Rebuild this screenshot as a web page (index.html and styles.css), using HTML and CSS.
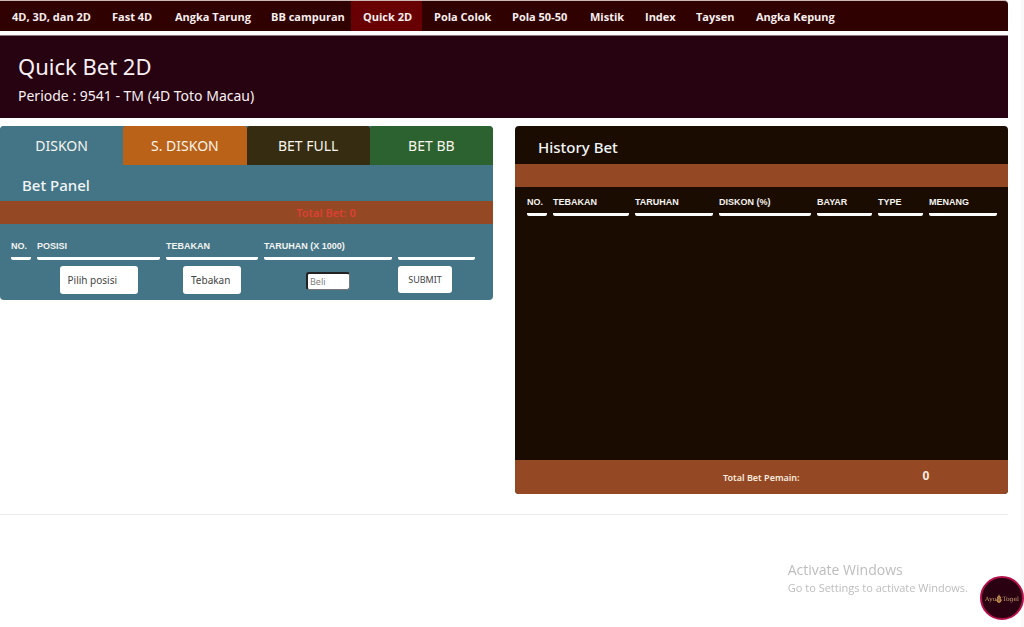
FILE: index.html
```html
<!DOCTYPE html>
<html lang="id">
<head>
<meta charset="utf-8">
<meta name="viewport" content="width=device-width, initial-scale=1">
<title>Quick Bet 2D</title>
<link rel="stylesheet" href="styles.css">
</head>
<body>
<div class="page">
  <nav class="nav">
    <a href="#">4D, 3D, dan 2D</a>
    <a href="#">Fast 4D</a>
    <a href="#">Angka Tarung</a>
    <a href="#">BB campuran</a>
    <a href="#" class="active">Quick 2D</a>
    <a href="#">Pola Colok</a>
    <a href="#">Pola 50-50</a>
    <a href="#">Mistik</a>
    <a href="#">Index</a>
    <a href="#">Taysen</a>
    <a href="#">Angka Kepung</a>
  </nav>
  <header class="banner">
    <h1>Quick Bet 2D</h1>
    <p>Periode : 9541 - TM (4D Toto Macau)</p>
  </header>
  <main class="panels">
    <section class="bet">
      <div class="tabs">
        <button type="button" class="tab tab-diskon">DISKON</button>
        <button type="button" class="tab tab-sdiskon">S. DISKON</button>
        <button type="button" class="tab tab-full">BET FULL</button>
        <button type="button" class="tab tab-bb">BET BB</button>
      </div>
      <h2>Bet Panel</h2>
      <div class="band total">Total Bet: 0</div>
      <form>
        <table class="grid bet-grid">
          <colgroup><col class="w20"><col class="w123"><col class="w92"><col class="w128"><col class="w77"></colgroup>
          <thead>
            <tr><th>NO.</th><th>POSISI</th><th>TEBAKAN</th><th>TARUHAN (X 1000)</th><th></th></tr>
          </thead>
          <tbody>
            <tr>
              <td></td>
              <td><select class="pick posisi" aria-label="Posisi"><option>Pilih posisi</option></select></td>
              <td><select class="pick tebakan" aria-label="Tebakan"><option>Tebakan</option></select></td>
              <td><input class="beli" type="text" placeholder="Beli" aria-label="Taruhan"></td>
              <td class="left"><button type="submit" class="submit">SUBMIT</button></td>
            </tr>
          </tbody>
        </table>
      </form>
    </section>
    <section class="history">
      <h2>History Bet</h2>
      <div class="band"></div>
      <div class="history-body">
        <table class="grid history-grid">
          <colgroup><col class="w20"><col class="w76"><col class="w78"><col class="w92"><col class="w55"><col class="w45"><col class="w68"></colgroup>
          <thead>
            <tr><th>NO.</th><th>TEBAKAN</th><th>TARUHAN</th><th>DISKON (%)</th><th>BAYAR</th><th>TYPE</th><th>MENANG</th></tr>
          </thead>
        </table>
      </div>
      <footer class="sum"><span>Total Bet Pemain:</span><strong>0</strong></footer>
    </section>
  </main>
  <hr>
</div>
<div class="watermark">
  <p class="wm-title">Activate Windows</p>
  <p>Go to Settings to activate Windows.</p>
</div>
<a href="#" class="badge" aria-label="AyuTogel">
  <span>Ayu</span>
  <svg viewBox="0 0 8 12" width="6" height="9"><path d="M4 0 5 3 7 4 6 6 8 8 6 11 4 12 2 11 0 8 2 6 1 4 3 3Z" fill="#c99a55"/><path d="M4 4v6M2 8h4" stroke="#6b3a28" fill="none"/></svg>
  <span>Togel</span>
</a>
</body>
</html>
```
FILE: styles.css
```css
* { box-sizing: border-box; }
body {
  margin: 0;
  min-height: 100vh;
  background: #fff;
  border-right: 3px solid #f9f9f9;
  font-family: "Noto Sans", "Open Sans", sans-serif;
}
h1, h2, p { margin: 0; font-weight: 400; }
.page { margin-right: 13px; }
.nav {
  display: grid;
  grid-template-columns: 100px 63px 96px 92px 71px 78px 78px 55px 51px 60px 1fr;
  border-top: 1px solid #cdb8b8;
  border-radius: 0 4px 0 0;
  background: #300101;
}
.nav a {
  padding: 0 0 0 12px;
  font: 700 11px/30px "Open Sans", sans-serif;
  line-height: 30px;
  padding-top: 1px;
  height: 30px;
  color: #f7eeee;
  text-decoration: none;
  white-space: nowrap;
}
.nav .active { background: #680003; }
.banner {
  margin-top: 4px;
  border-top: 1px solid #8a7580;
  padding: 16px 18px 12px;
  background: #270210;
  color: #f8f0f3;
}
.banner h1 { font-size: 22px; line-height: 28px; }
.banner p { margin-top: 6px; font-size: 14px; line-height: 20px; }
.panels {
  display: grid;
  grid-template-columns: 1fr 1fr;
  gap: 22px;
  margin-top: 8px;
  align-items: start;
}
.bet {
  overflow: hidden;
  border-radius: 4px;
  background: #437587;
  padding-bottom: 1px;
}
.tabs { display: grid; grid-template-columns: repeat(4, 1fr); }
.tab {
  height: 39px;
  padding: 0;
  border: 0;
  border-radius: 3px 3px 0 0;
  font: 14px "Noto Sans", sans-serif;
  color: #f8f5ee;
}
.tab-diskon { background: #437587; }
.tab-sdiskon { background: #ba6218; }
.tab-full { background: #352c12; }
.tab-bb { background: #2c6130; }
h2 { font-size: 15px; font-weight: 500; color: #f1f5f6; }
.bet h2 { padding: 8px 22px 4px; line-height: 24px; }
.band { height: 23px; background: #944924; }
.total {
  padding-left: 159px;
  text-align: center;
  font-size: 11px;
  font-weight: 600;
  line-height: 23px;
  color: #dd3f35;
}
.grid { table-layout: fixed; border-spacing: 6px 0; }
.bet-grid { width: calc(100% - 17px); margin: 14px 12px 0 5px; }
.history-grid { width: calc(100% - 11px); margin-left: 6px; }
.grid th {
  height: 22px;
  padding: 0 0 4px;
  border-bottom: 3px solid #fff;
  border-radius: 2px;
  text-align: left;
  font: 700 9px/14px "Liberation Sans", Arial, sans-serif;
  color: #f3f3f0;
  white-space: nowrap;
}
.grid td { height: 39px; padding: 0; text-align: center; vertical-align: middle; }
.grid .left { text-align: left; }
.w20 { width: 20px; }
.w45 { width: 45px; }
.w55 { width: 55px; }
.w68 { width: 68px; }
.w76 { width: 76px; }
.w77 { width: 77px; }
.w78 { width: 78px; }
.w92 { width: 92px; }
.w123 { width: 123px; }
.w128 { width: 128px; }
.pick, .submit {
  appearance: none;
  height: 28px;
  padding: 0 8px;
  border: 0;
  border-radius: 3px;
  background: #fff;
  font: 10px "Noto Sans", sans-serif;
  color: #444;
  vertical-align: middle;
}
.posisi { width: 78px; }
.tebakan { width: 58px; }
.submit { width: 54px; height: 27px; padding: 0; font-size: 9px; }
.beli {
  width: 44px;
  height: 18px;
  padding: 0 2px;
  border: 2px solid #222;
  border-right: 1px solid #777;
  border-bottom: 1px solid #777;
  border-radius: 3px;
  font: 9px "Noto Sans", sans-serif;
  vertical-align: middle;
}
.beli::placeholder { color: #808080; }
.history { overflow: hidden; border-radius: 4px; background: #1b0c02; }
.history h2 { padding: 9px 23px 5px; line-height: 24px; }
.history-body { min-height: 273px; padding-top: 7px; }
.sum {
  display: grid;
  grid-template-columns: 2fr 1fr;
  height: 34px;
  background: #944924;
  color: #f8e9df;
  text-align: center;
}
.sum span { padding-left: 164px; font-size: 9px; font-weight: 600; line-height: 36px; }
.sum strong { font-size: 12px; line-height: 32px; }
hr { margin: 20px 0 0; border: 0; border-top: 1px solid #ebebeb; }
.watermark {
  position: fixed;
  right: 56px;
  bottom: 31px;
  font: 11px/16px "Open Sans", sans-serif;
  color: #bdbdbd;
}
.watermark .wm-title { font-size: 14px; line-height: 20px; }
.badge {
  position: fixed;
  right: 0;
  bottom: 7px;
  display: flex;
  align-items: center;
  justify-content: center;
  width: 44px;
  height: 44px;
  border: 2px solid #b5104a;
  border-radius: 50%;
  background: #290111;
  font: 6px "DejaVu Serif", serif;
  color: #c8a071;
  text-decoration: none;
}
```
